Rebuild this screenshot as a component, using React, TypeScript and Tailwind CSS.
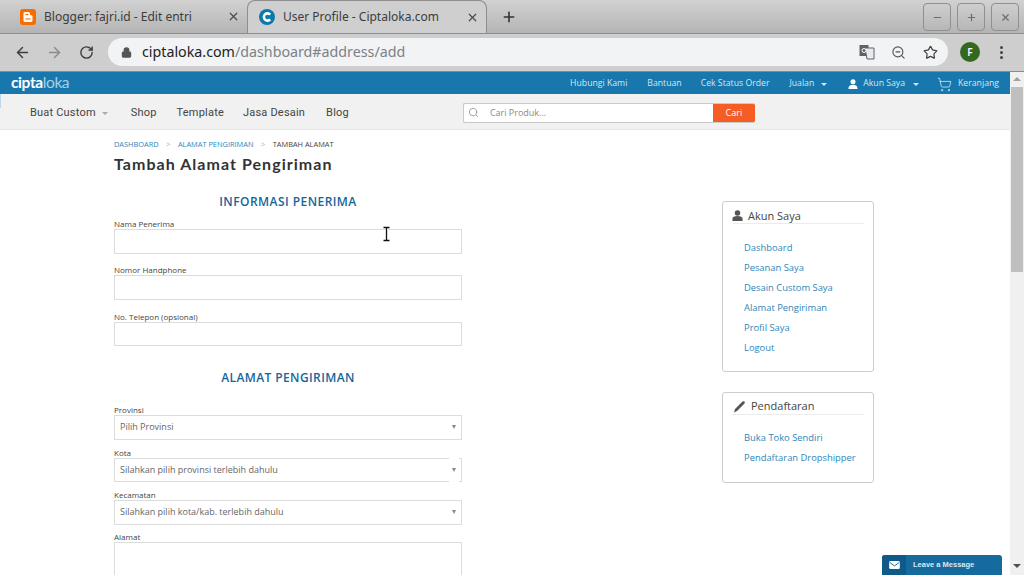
import React from "react";
import { ArrowLeft, ArrowRight, RotateCw, Lock, X, Plus, Minus, Search, ZoomOut, Star, ShoppingCart } from "lucide-react";

const blue = "text-[#2f86b9]";

function Tab({ active, icon, title }: { active?: boolean; icon: React.ReactNode; title: string }) {
  return (
    <div className={`relative flex h-[33px] w-[240px] shrink-0 items-center pr-[7px] ${active ? "rounded-t-[8px] border border-b-0 border-[#8e8e8e] bg-[#cfcfcf] pl-[11px]" : "pl-[13px]"}`}>
      <span className="flex h-[16px] w-[16px] shrink-0 items-center justify-center">{icon}</span>
      <span className="ml-[8px] flex-1 truncate text-[12px] text-[#3c3c3c]">{title}</span>
      <X size={13} strokeWidth={2.2} className="text-[#4a4a4a]" />
    </div>
  );
}

function WinBtn({ children }: { children: React.ReactNode }) {
  return (
    <div className="flex h-[28px] w-[28px] items-center justify-center rounded-[4px] border border-[#8f8f8f] text-[#6d6d6d]">{children}</div>
  );
}

function Field({ label, mt, h = "h-[25px]" }: { label: string; mt: string; h?: string }) {
  return (
    <div className={mt}>
      <div className="h-[10px] text-[8px] leading-[10px] text-[#444] font-['Open_Sans',sans-serif]">{label}</div>
      <div className={`${h} border border-[#dcdcdc] bg-white`} />
    </div>
  );
}

function SelectField({ label, value, mt, notch, h = "h-[25px]" }: { label: string; value: string; mt: string; notch?: boolean; h?: string }) {
  return (
    <div className={mt}>
      <div className="h-[10px] text-[8px] leading-[10px] text-[#444]">{label}</div>
      <div className={`relative flex ${h} items-center border border-[#dcdcdc] bg-white pl-[5px] pr-[5px] ${notch ? "" : "pb-px"}`}>
        <span className="flex-1 text-[9px] text-[#666]">{value}</span>
        <span className="h-0 w-0 border-x-[2.5px] border-t-[4px] border-x-transparent border-t-[#888]" />
        {notch && <span className="absolute right-[2px] -top-px -bottom-px w-[10px] border-y border-white" />}
      </div>
    </div>
  );
}

function SideCard({ icon, title, links, className, titleGap, linksMt, titleText }: { icon: React.ReactNode; title: string; links: string[]; className: string; titleGap: string; linksMt: string; titleText: string }) {
  return (
    <div className={`w-[152px] rounded-[3px] border border-[#cdcdcd] bg-white px-[9px] pt-[6px] ${className}`}>
      <div className={`flex h-[16px] items-center border-b border-[#ececec] pb-px ${titleGap}`}>
        {icon}
        <span className={`text-[11px] leading-[15px] text-[#444] ${titleText}`}>{title}</span>
      </div>
      <div className={`${linksMt} flex flex-col pl-[12px]`}>
        {links.map((l) => (
          <a key={l} className={`h-[20px] text-[9.4px] leading-[20px] ${blue} whitespace-nowrap`}>{l}</a>
        ))}
      </div>
    </div>
  );
}

export default function App() {
  return (
    <div className="relative flex h-[575px] w-[1024px] flex-col overflow-hidden bg-white font-['Open_Sans',sans-serif]">
      {/* tab strip */}
      <div className="flex h-[34px] shrink-0 items-start border-b border-[#8e8e8e] bg-gradient-to-b from-[#d2d2d2] to-[#b4b4b4] pl-[7px] pr-[5px] font-['Noto_Sans',sans-serif]">
        <Tab
          title="Blogger: fajri.id - Edit entri"
          icon={
            <svg viewBox="0 0 16 16" className="h-[16px] w-[16px]">
              <rect width="16" height="16" rx="3" fill="#f76d00" />
              <rect x="3.5" y="3" width="6.5" height="5" rx="1.6" fill="#fff" />
              <rect x="3.5" y="6" width="9" height="7" rx="1.6" fill="#fff" />
              <rect x="5.5" y="5" width="3" height="1.1" fill="#f76d00" />
              <rect x="5.5" y="9.4" width="5" height="1.1" fill="#f76d00" />
            </svg>
          }
        />
        <Tab
          active
          title="User Profile - Ciptaloka.com"
          icon={
            <svg viewBox="0 0 16 16" className="h-[16px] w-[16px]">
              <circle cx="8" cy="8" r="8" fill="#0d79ab" />
              <path d="M11.2 5.6A3.6 3.6 0 1 0 11.2 10.4" fill="none" stroke="#fff" strokeWidth="2.6" />
            </svg>
          }
        />
        <div className="flex h-[33px] w-[44px] items-center justify-center">
          <Plus size={16} strokeWidth={2.4} className="text-[#333]" />
        </div>
        <div className="flex-1" />
        <div className="mt-[3px] flex gap-[6px]">
          <WinBtn><Minus size={11} strokeWidth={2.6} /></WinBtn>
          <WinBtn><Plus size={11} strokeWidth={2.6} /></WinBtn>
          <WinBtn><X size={11} strokeWidth={2.6} /></WinBtn>
        </div>
      </div>
      {/* toolbar */}
      <div className="flex h-[38px] shrink-0 items-center border-b border-[#8a8a8a] bg-[#cecece] pb-px pl-[14px] font-['Noto_Sans',sans-serif]">
        <ArrowLeft size={17} strokeWidth={2} className="text-[#3c3c3c]" />
        <ArrowRight size={17} strokeWidth={2} className="ml-[15px] text-[#8a8a8a]" />
        <RotateCw size={15} strokeWidth={2.2} className="ml-[16px] text-[#3c3c3c]" />
        <div className="ml-[14px] flex h-[28px] w-[840px] items-center rounded-full bg-[#f1f3f4] pl-[13px]">
          <Lock size={11} strokeWidth={2.5} fill="#555" className="text-[#555]" />
          <span className="ml-[10px] text-[14.25px] leading-[28px] text-[#222]">ciptaloka.com<span className="text-[#7c8186]">/dashboard#address/add</span></span>
          <div className="flex-1" />
          <svg viewBox="0 0 16 16" className="h-[16px] w-[16px]">
            <rect x="0.5" y="1" width="9" height="11" fill="#5f6368" />
            <path d="M6 4h9v11H8z" fill="#e8eaed" stroke="#5f6368" />
            <circle cx="5" cy="6.5" r="2" fill="none" stroke="#fff" />
          </svg>
          <ZoomOut size={15} strokeWidth={1.8} className="ml-[16px] text-[#555]" />
          <Star size={15} strokeWidth={2} className="ml-[17px] mr-[10px] text-[#444]" />
        </div>
        <div className="ml-[12px] flex h-[20px] w-[20px] items-center justify-center rounded-full bg-[#33691e] text-[10px] font-semibold text-white">F</div>
        <div className="ml-[20px] flex flex-col gap-[2px]">
          <span className="h-[3px] w-[3px] rounded-full bg-[#444]" />
          <span className="h-[3px] w-[3px] rounded-full bg-[#444]" />
          <span className="h-[3px] w-[3px] rounded-full bg-[#444]" />
        </div>
      </div>
      {/* page + scrollbar */}
      <div className="flex min-h-0 flex-1">
        <div className="relative flex min-w-0 flex-1 flex-col">
          <div className="flex h-[22px] shrink-0 items-center bg-[#1878ae] pl-[11px] pr-[11px] pt-[2px] text-[8.7px] text-[#d5e6f1]">
            <span className="pb-[4px] text-[15.5px] font-bold leading-[20px] tracking-[-0.4px] text-white font-['Lato',sans-serif]">cipta<span className="font-normal text-[#a9d0e8]">loka</span></span>
            <div className="flex-1" />
            <span>Hubungi Kami</span>
            <span className="ml-[20px]">Bantuan</span>
            <span className="ml-[19px]">Cek Status Order</span>
            <span className="ml-[20px]">Jualan</span>
            <span className="ml-[7px] h-0 w-0 border-x-[3.5px] border-t-[3.5px] border-x-transparent border-t-[#d5e6f1]" />
            <svg viewBox="0 0 12 12" className="ml-[21px] h-[10px] w-[10px]" fill="#fff">
              <circle cx="6" cy="3.3" r="3" />
              <path d="M0.5 12c0-3.6 2-5 5.5-5s5.5 1.4 5.5 5z" />
            </svg>
            <span className="ml-[5px]">Akun Saya</span>
            <span className="ml-[8px] h-0 w-0 border-x-[3.5px] border-t-[3.5px] border-x-transparent border-t-[#d5e6f1]" />
            <ShoppingCart size={15} strokeWidth={1.2} className="ml-[18px] text-[#e4eff6]" />
            <span className="ml-[6px]">Keranjang</span>
          </div>
          <div className="flex h-[36px] shrink-0 items-center border-b border-[#e6e6e6] bg-[#f1f1f1] pl-[30px] pt-[4px] text-[11px] text-[#444] font-['Roboto',sans-serif] tracking-[0.2px]">
            <span>Buat Custom</span>
            <span className="ml-[6px] h-0 w-0 border-x-[3.5px] border-t-[3.5px] border-x-transparent border-t-[#aaa]" />
            <span className="ml-[23px]">Shop</span>
            <span className="ml-[20px]">Template</span>
            <span className="ml-[19px]">Jasa Desain</span>
            <span className="ml-[21px]">Blog</span>
            <div className="-mt-[2px] ml-[114px] flex h-[20px] w-[292px] items-center overflow-hidden rounded-[2px] border border-r-0 border-[#c9c9c9] bg-white font-['Open_Sans',sans-serif] tracking-normal">
              <Search size={11} strokeWidth={2} className="ml-[4px] text-[#999]" />
              <span className="ml-[11px] flex-1 text-[9px] text-[#888]">Cari Produk...</span>
              <div className="flex h-full w-[42px] items-center justify-center bg-[#f55d25] text-[9px] text-white">Cari</div>
            </div>
          </div>
          <span className="absolute left-0 top-[22px] h-[14px] w-px bg-[#bcd8ea]" />
          <div className="flex min-h-0 flex-1 pl-[114px]">
            <div className="w-[348px] shrink-0">
              <div className="mt-[9px] flex h-[10px] items-center whitespace-nowrap text-[7.4px] leading-[10px]">
                <span className={blue}>DASHBOARD</span>
                <span className="mx-[7.5px] text-[#aaa]">&gt;</span>
                <span className={blue}>ALAMAT PENGIRIMAN</span>
                <span className="mx-[7.5px] text-[#aaa]">&gt;</span>
                <span className="text-[#444]">TAMBAH ALAMAT</span>
              </div>
              <h1 className="mt-[5px] whitespace-nowrap text-[16px] font-bold leading-[20px] tracking-[1.04px] text-[#333] font-['Lato',sans-serif]">Tambah Alamat Pengiriman</h1>
              <h2 className="mt-[18px] h-[20px] text-center text-[12px] font-semibold leading-[20px] tracking-[0.45px] text-[#15669a]">INFORMASI PENERIMA</h2>
              <Field label="Nama Penerima" mt="mt-[7px]" />
              <Field label="Nomor Handphone" mt="mt-[11px]" />
              <Field label="No. Telepon (opsional)" mt="mt-[12px]" h="h-[24px]" />
              <h2 className="mt-[22px] h-[20px] text-center text-[12px] font-semibold leading-[20px] tracking-[0.4px] text-[#15669a]">ALAMAT PENGIRIMAN</h2>
              <SelectField label="Provinsi" value="Pilih Provinsi" mt="mt-[17px]" />
              <SelectField label="Kota" value="Silahkan pilih provinsi terlebih dahulu" mt="mt-[8px]" notch h="h-[24px]" />
              <SelectField label="Kecamatan" value="Silahkan pilih kota/kab. terlebih dahulu" mt="mt-[8px]" />
              <Field label="Alamat" mt="mt-[7px]" h="h-[60px]" />
            </div>
            <div className="ml-[260px] shrink-0 pt-[71px]">
              <SideCard
                className="h-[171px]"
                titleGap="gap-[5px]"
                linksMt="mt-[14px]"
                titleText=""
                icon={
                  <svg viewBox="0 0 12 12" className="h-[11px] w-[11px]" fill="#555">
                    <circle cx="6" cy="3.2" r="3" />
                    <path d="M0.5 12V9.5C0.5 7.5 2.5 6.5 6 6.5s5.5 1 5.5 3V12z" />
                  </svg>
                }
                title="Akun Saya"
                links={["Dashboard", "Pesanan Saya", "Desain Custom Saya", "Alamat Pengiriman", "Profil Saya", "Logout"]}
              />
              <SideCard
                className="mt-[20px] h-[91px]"
                titleGap="gap-[5px] pl-[1px]"
                linksMt="mt-[13px]"
                titleText="pb-[2px]"
                icon={
                  <svg viewBox="0 0 13 13" className="h-[13px] w-[13px]" fill="#555">
                    <path d="M1 12.5 2 9 9.5 1.5c.8-.6 1.6-.4 2 .1.4.5.5 1.2 0 1.8L4 11z" />
                  </svg>
                }
                title="Pendaftaran"
                links={["Buka Toko Sendiri", "Pendaftaran Dropshipper"]}
              />
            </div>
          </div>
        </div>
        <div className="flex w-[14px] shrink-0 flex-col items-center bg-[#f0f0f0] pt-[5px]">
          <span className="h-0 w-0 border-x-[4px] border-b-[4px] border-x-transparent border-b-[#a0a0a0]" />
          <div className="mt-[6px] h-[185px] w-[12px] bg-[#bfbfbf]" />
          <div className="flex-1" />
          <span className="mb-[7px] h-0 w-0 border-x-[4px] border-t-[4px] border-x-transparent border-t-[#505050]" />
        </div>
      </div>
      {/* I-beam cursor */}
      <svg viewBox="0 0 9 16" className="absolute left-[382px] top-[226px] h-[16px] w-[9px]">
        <path d="M1 1h7M1 15h7M4.5 1v14" stroke="#fff" strokeWidth="3.5" />
        <path d="M1.5 1.5h6M1.5 14.5h6M4.5 1.5v13" stroke="#111" strokeWidth="1.3" fill="none" />
      </svg>
      {/* chat widget */}
      <div className="absolute bottom-0 left-[882px] flex h-[20px] w-[120px] items-center overflow-hidden rounded-t-[3px] bg-[#156a9e] text-[7.5px] font-bold text-[#dbe8f1] font-['Liberation_Sans',sans-serif]">
        <div className="flex h-full w-[24px] items-center justify-center bg-[#105a88]">
          <svg viewBox="0 0 12 9" className="h-[8px] w-[11px]">
            <rect width="12" height="9" rx="1.5" fill="#fff" />
            <path d="M0.5 1.5 6 5.5l5.5-4" fill="none" stroke="#105a88" strokeWidth="1" />
          </svg>
        </div>
        <span className="ml-[7px]">Leave a Message</span>
      </div>
    </div>
  );
}
